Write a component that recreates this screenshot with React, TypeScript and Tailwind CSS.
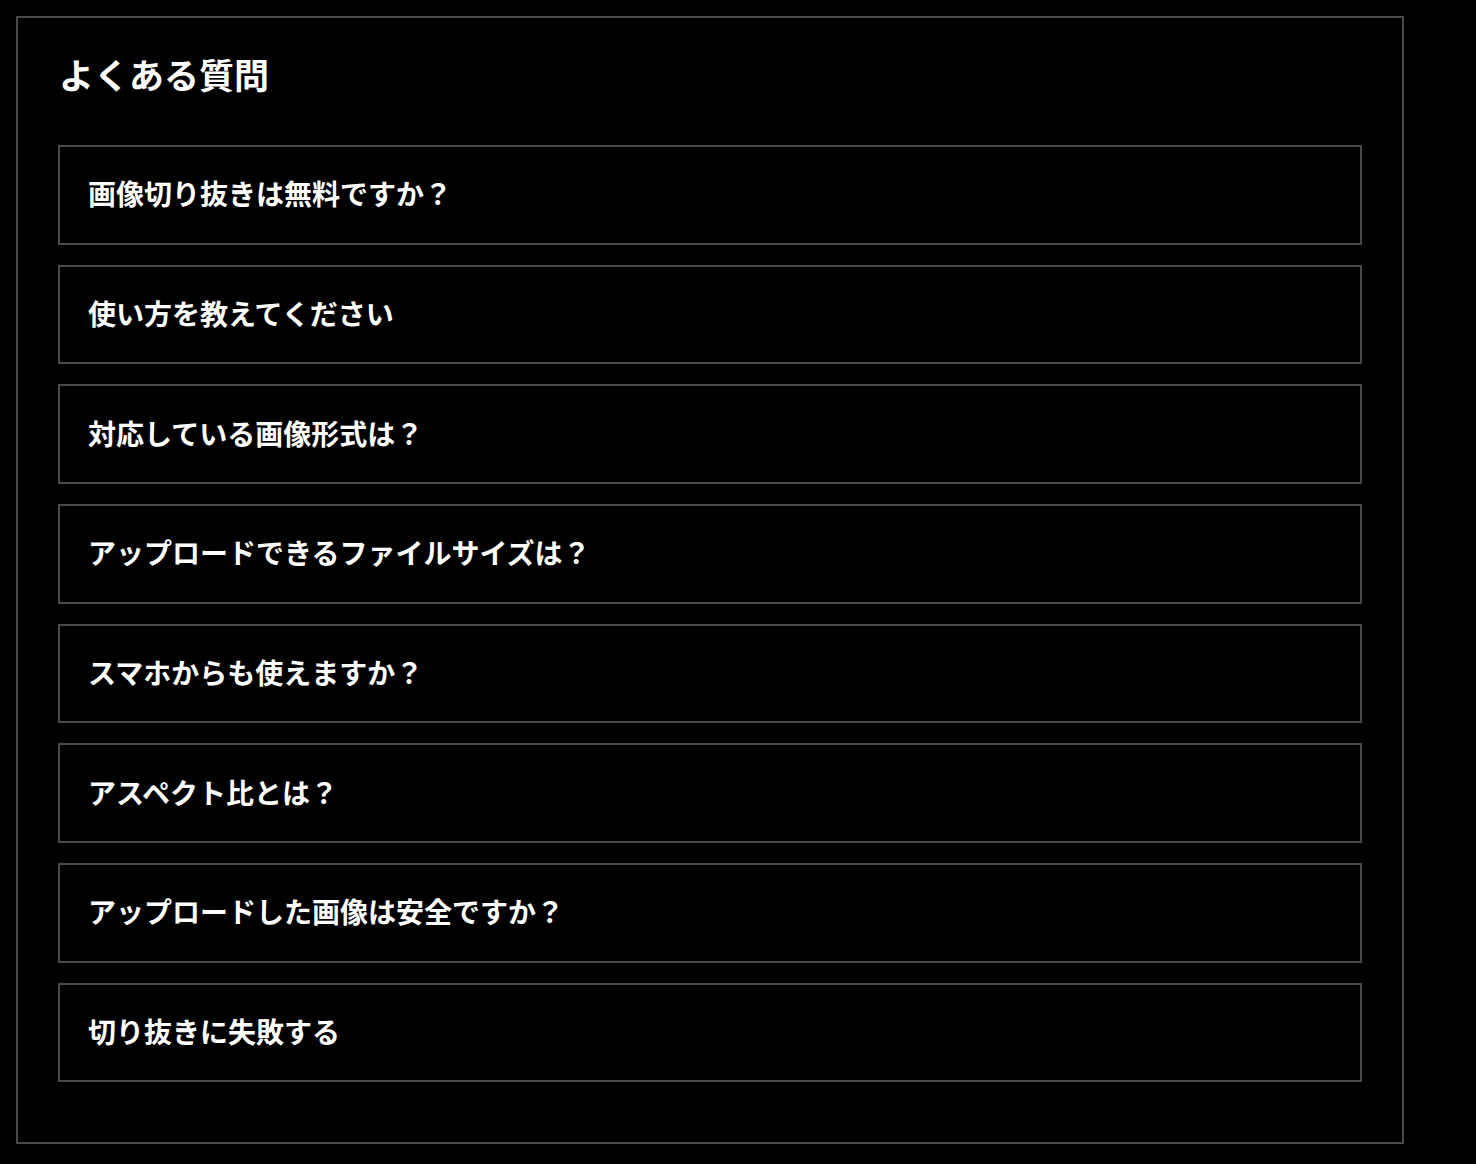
import React from "react";

const items = [
  "画像切り抜きは無料ですか？",
  "使い方を教えてください",
  "対応している画像形式は？",
  "アップロードできるファイルサイズは？",
  "スマホからも使えますか？",
  "アスペクト比とは？",
  "アップロードした画像は安全ですか？",
  "切り抜きに失敗する",
];

export default function App() {
  return (
    <div
      className="min-h-[1164px] bg-black p-4 text-white"
      style={{ fontFamily: '"Noto Sans CJK JP", "Noto Sans", sans-serif' }}
    >
      <section className="w-[1388px] border-2 border-[#4a4a4a] px-10 pt-[36px] pb-[60px]">
        <h2 className="text-[35px] leading-[40px] font-semibold mb-[51px] pl-[1px]">よくある質問</h2>
        <div className="flex flex-col gap-[20.2px]">
          {items.map((q) => (
            <div
              key={q}
              className="h-[99.5px] flex items-center border-2 border-[#4a4a4a] px-[28px] pb-[3px] text-[28px] font-semibold leading-none"
            >
              {q}
            </div>
          ))}
        </div>
      </section>
    </div>
  );
}
